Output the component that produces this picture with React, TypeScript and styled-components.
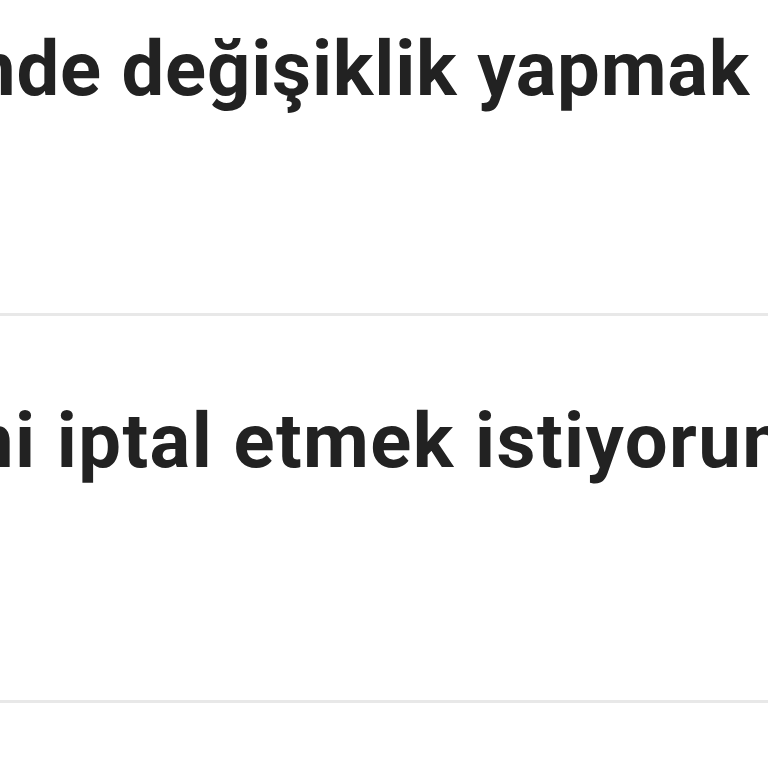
import styled, { createGlobalStyle } from "styled-components";

const GlobalStyle = createGlobalStyle`
  html, body {
    margin: 0;
    padding: 0;
    background: #ffffff;
    overflow: hidden;
  }
`;

interface RowProps {
  $top: number;
  $bottom: number;
}

interface TitleProps {
  $shift: number;
  $spacing: number;
}

export default function App() {
  return (
    <>
      <GlobalStyle />
      <List>
        <Row $top={24} $bottom={198}>
          <Title $shift={-27} $spacing={0.8}>
            nde değişiklik yapmak
          </Title>
        </Row>
        <Row $top={80} $bottom={213}>
          <Title $shift={-29} $spacing={1.4}>
            ni iptal etmek istiyorum
          </Title>
        </Row>
        <Row $top={80} $bottom={213}>
          <Title $shift={0} $spacing={0.8}>
            &nbsp;
          </Title>
        </Row>
      </List>
    </>
  );
}

const List = styled.div`
  width: 768px;
  height: 768px;
  overflow: hidden;
  display: flex;
  flex-direction: column;
  font-family: Roboto, "Noto Sans", sans-serif;
`;

const Row = styled.div<RowProps>`
  flex: none;
  padding: ${(p) => `${p.$top}px 0 ${p.$bottom}px`};
  border-bottom: 3px solid #e8e8e8;
  overflow: hidden;
`;

const Title = styled.div<TitleProps>`
  margin-left: ${(p) => p.$shift}px;
  font-size: 76px;
  line-height: 91px;
  font-weight: 700;
  letter-spacing: ${(p) => p.$spacing}px;
  color: #222222;
  white-space: nowrap;
`;
